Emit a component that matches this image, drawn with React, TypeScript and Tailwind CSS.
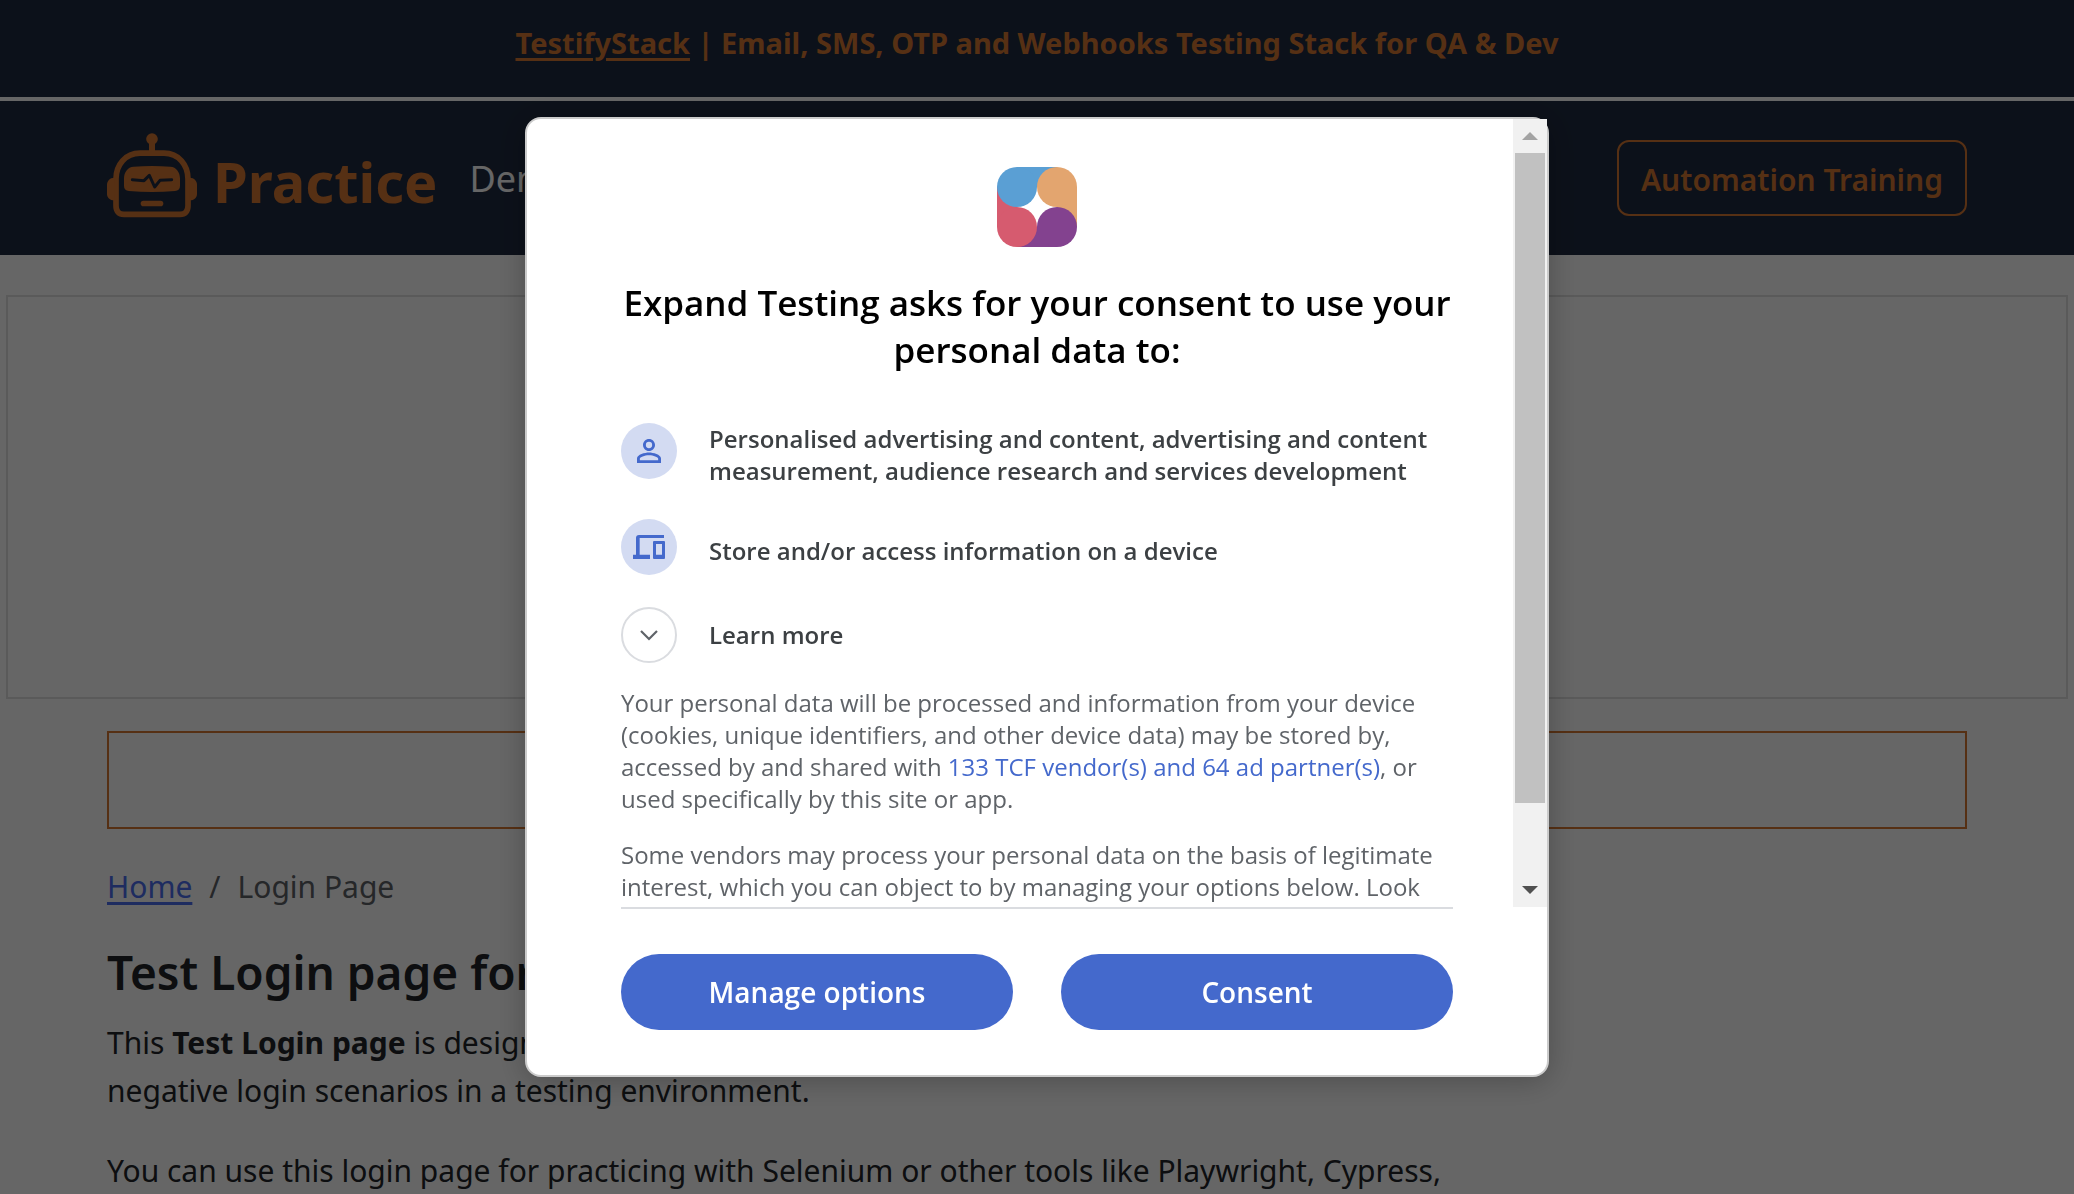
import React from "react";

function RobotLogo() {
  return (
    <svg width="90" height="85" viewBox="0 0 270 255" fill="none" aria-hidden="true">
      <circle cx="135" cy="18" r="17.500" fill="#d77832" />
      <path d="M135 18V60" stroke="#d77832" strokeWidth="18" />
      <path
        d="M99 60.500H171C215 60.500 243 96 243 138V218C243 234 235 244 219 244H51C35 244 27 234 27 218V138C27 96 55 60.500 99 60.500Z"
        stroke="#d77832"
        strokeWidth="17"
      />
      <path d="M22 134C8 134 0 144 0 156V182C0 194 8 202 22 202Z" fill="#d77832" />
      <path d="M248 134C262 134 270 144 270 156V182C270 194 262 202 248 202Z" fill="#d77832" />
      <path
        d="M80 101Q135 97 190 101C208 102 219 118 219 136V158C219 168 214 173 204 174Q135 180 66 174C56 173 51 168 51 158V136C51 118 62 102 80 101Z"
        fill="#d77832"
      />
      <path
        d="M76 140L111 143L127 127L143 162L159 142L194 140"
        stroke="#202b41"
        strokeWidth="9"
        strokeLinecap="round"
        strokeLinejoin="round"
      />
      <rect x="101" y="203" width="68" height="17" rx="8.500" fill="#d77832" />
    </svg>
  );
}

function SiteLogo() {
  return (
    <svg width="80" height="80" viewBox="0 0 80 80" className="mx-auto" role="img" aria-label="Expand Testing">
      <path d="M20 0H60V20H20Z" fill="#5a9fd4" />
      <path d="M60 20H80V60H60Z" fill="#e3a56f" />
      <path d="M20 60H60V80H20Z" fill="#83428f" />
      <path d="M0 20H20V60H0Z" fill="#d65b6f" />
      <circle cx="20" cy="20" r="20" fill="#5a9fd4" />
      <circle cx="60" cy="20" r="20" fill="#e3a56f" />
      <circle cx="60" cy="60" r="20" fill="#83428f" />
      <circle cx="20" cy="60" r="20" fill="#d65b6f" />
    </svg>
  );
}

function PersonIcon() {
  return (
    <svg width="36" height="36" viewBox="0 0 24 24" fill="#4469cc" aria-hidden="true">
      <path d="M12 5.900a2.100 2.100 0 1 1 0 4.200 2.100 2.100 0 0 1 0-4.200m0 9c2.970 0 6.100 1.460 6.100 2.100v1.100H5.900V17c0-.640 3.130-2.100 6.100-2.100M12 4C9.790 4 8 5.790 8 8s1.790 4 4 4 4-1.790 4-4-1.790-4-4-4zm0 9c-2.670 0-8 1.340-8 4v3h16v-3c0-2.660-5.330-4-8-4z" />
    </svg>
  );
}

function DevicesIcon() {
  return (
    <svg width="32" height="24" viewBox="0 0 96 72" fill="#4469cc" aria-hidden="true">
      <path d="M93 0H18Q9 0 9 9V59H0V72H51V59H20V9H93Z" />
      <path fillRule="evenodd" d="M63 18H93Q96 18 96 21V69Q96 72 93 72H63Q60 72 60 69V21Q60 18 63 18ZM69 27V59H87V27Z" />
    </svg>
  );
}

function ConsentDialog() {
  return (
    <div
      role="dialog"
      aria-modal="true"
      aria-labelledby="consent-title"
      className="w-full max-w-[1024px] rounded-2xl border-2 border-[#cbcbcb] bg-white font-['Open_Sans',sans-serif] shadow-[0_4px_30px_rgba(0,0,0,0.25)]"
    >
      <div className="flex h-[788px]">
        <div className="min-w-0 flex-1 overflow-hidden pt-12 pr-[60px] pl-[94px]">
          <SiteLogo />
          <h2 id="consent-title" className="mt-8 text-center text-[35px] leading-[47px] font-semibold text-black">
            Expand Testing asks for your consent to use your personal data to:
          </h2>
          <ul className="mt-[50px] flex flex-col gap-8 text-2xl font-semibold text-[#3c4043]">
            <li className="flex gap-8">
              <span className="flex size-14 shrink-0 items-center justify-center rounded-full bg-[#d3dbf2]">
                <PersonIcon />
              </span>
              <span>Personalised advertising and content, advertising and content measurement, audience research and services development</span>
            </li>
            <li className="flex h-16 gap-8">
              <span className="flex size-14 shrink-0 items-center justify-center rounded-full bg-[#d3dbf2]">
                <DevicesIcon />
              </span>
              <span className="self-center">Store and/or access information on a device</span>
            </li>
          </ul>
          <button type="button" className="mt-6 flex items-center gap-8 text-2xl font-semibold text-[#3c4043]">
            <span className="flex size-14 shrink-0 items-center justify-center rounded-full border-2 border-[#dadce0]">
              <svg width="18" height="11" viewBox="0 0 18 11" fill="none" stroke="#5f6368" strokeWidth="2.200" aria-hidden="true">
                <path d="M1 1L9 9L17 1" />
              </svg>
            </span>
            <span>Learn more</span>
          </button>
          <div className="mt-6 flex flex-col gap-6 text-2xl text-[#5f6368]">
            <p>
              Your personal data will be processed and information from your device (cookies, unique identifiers, and other device data) may
              be stored by, accessed by and shared with{" "}
              <a href="#vendors" className="text-[#4469cc]">
                133 TCF vendor(s) and 64 ad partner(s)
              </a>
              , or used specifically by this site or app.
            </p>
            <p>
              Some vendors may process your personal data on the basis of legitimate interest, which you can object to by managing your
              options below. Look
            </p>
          </div>
        </div>
        <div aria-hidden="true" className="flex w-[34px] shrink-0 flex-col items-center bg-[#f1f1f1]">
          <div className="flex h-[34px] items-center justify-center">
            <svg width="16" height="8" viewBox="0 0 16 8" fill="#a3a3a3">
              <path d="M8 0L16 8H0Z" />
            </svg>
          </div>
          <div className="h-[650px] w-[30px] bg-[#c1c1c1]" />
          <div className="mt-auto flex h-[34px] items-center justify-center">
            <svg width="16" height="8" viewBox="0 0 16 8" fill="#505050">
              <path d="M8 8L16 0H0Z" />
            </svg>
          </div>
        </div>
      </div>
      <div className="mx-[94px] flex gap-12 border-t-2 border-[#dadce0] py-[45px]">
        <button type="button" className="h-[76px] flex-1 rounded-full bg-[#4469cc] text-[28px] font-semibold text-white">
          Manage options
        </button>
        <button type="button" className="h-[76px] flex-1 rounded-full bg-[#4469cc] text-[28px] font-semibold text-white">
          Consent
        </button>
      </div>
    </div>
  );
}

export default function App() {
  return (
    <div className="h-screen overflow-hidden bg-white font-['Noto_Sans',sans-serif] text-[30px] leading-[48px] text-[#212529]">
      <div className="border-b-4 border-white bg-[#202b41] pt-[19px] pb-[30px] text-center text-[29px] font-bold text-[#d77832]">
        <a href="#testifystack" className="underline decoration-3 underline-offset-4">
          TestifyStack
        </a>{" "}
        | Email, SMS, OTP and Webhooks Testing Stack for QA &amp; Dev
      </div>

      <header className="flex h-[154px] items-center bg-[#202b41] px-[107px]">
        <a href="#home" className="flex items-center gap-4 pb-1.5 text-[56px] font-bold text-[#d77832]">
          <RobotLogo />
          <span className="pt-3">Practice</span>
        </a>
        <nav className="ml-8 pt-1.5">
          <a href="#demos" className="text-4xl text-white">
            Demos
          </a>
        </nav>
        <a
          href="#training"
          className="ml-auto flex h-[76px] items-center rounded-xl border-2 border-[#d77832] px-[22px] pt-1 font-semibold text-[#d77832]"
        >
          Automation Training
        </a>
      </header>

      <div className="mx-1.5 mt-10 h-[404px] border-2 border-[#e0e0e0]" />

      <main className="px-[107px] pt-8">
        <div className="h-[98px] border-2 border-[#d77832]" />
        <nav aria-label="Breadcrumb" className="mt-[34px]">
          <ol className="flex gap-[17px]">
            <li>
              <a href="#home" className="text-[#4b6ef0] underline decoration-3 underline-offset-4">
                Home
              </a>
            </li>
            <li aria-hidden="true" className="text-[#5c6166]">/</li>
            <li className="text-[#5c6166]">Login Page</li>
          </ol>
        </nav>
        <h1 className="mt-8 text-[46px] leading-[58px] font-semibold">Test Login page for</h1>
        <p className="mt-[18px]">
          This <b>Test Login page</b> is designed to help you practice both positive and
          <br />
          negative login scenarios in a testing environment.
        </p>
        <p className="mt-8">You can use this login page for practicing with Selenium or other tools like Playwright, Cypress,</p>
      </main>

      <div className="fixed inset-0 flex items-center justify-center bg-black/60">
        <ConsentDialog />
      </div>
    </div>
  );
}
